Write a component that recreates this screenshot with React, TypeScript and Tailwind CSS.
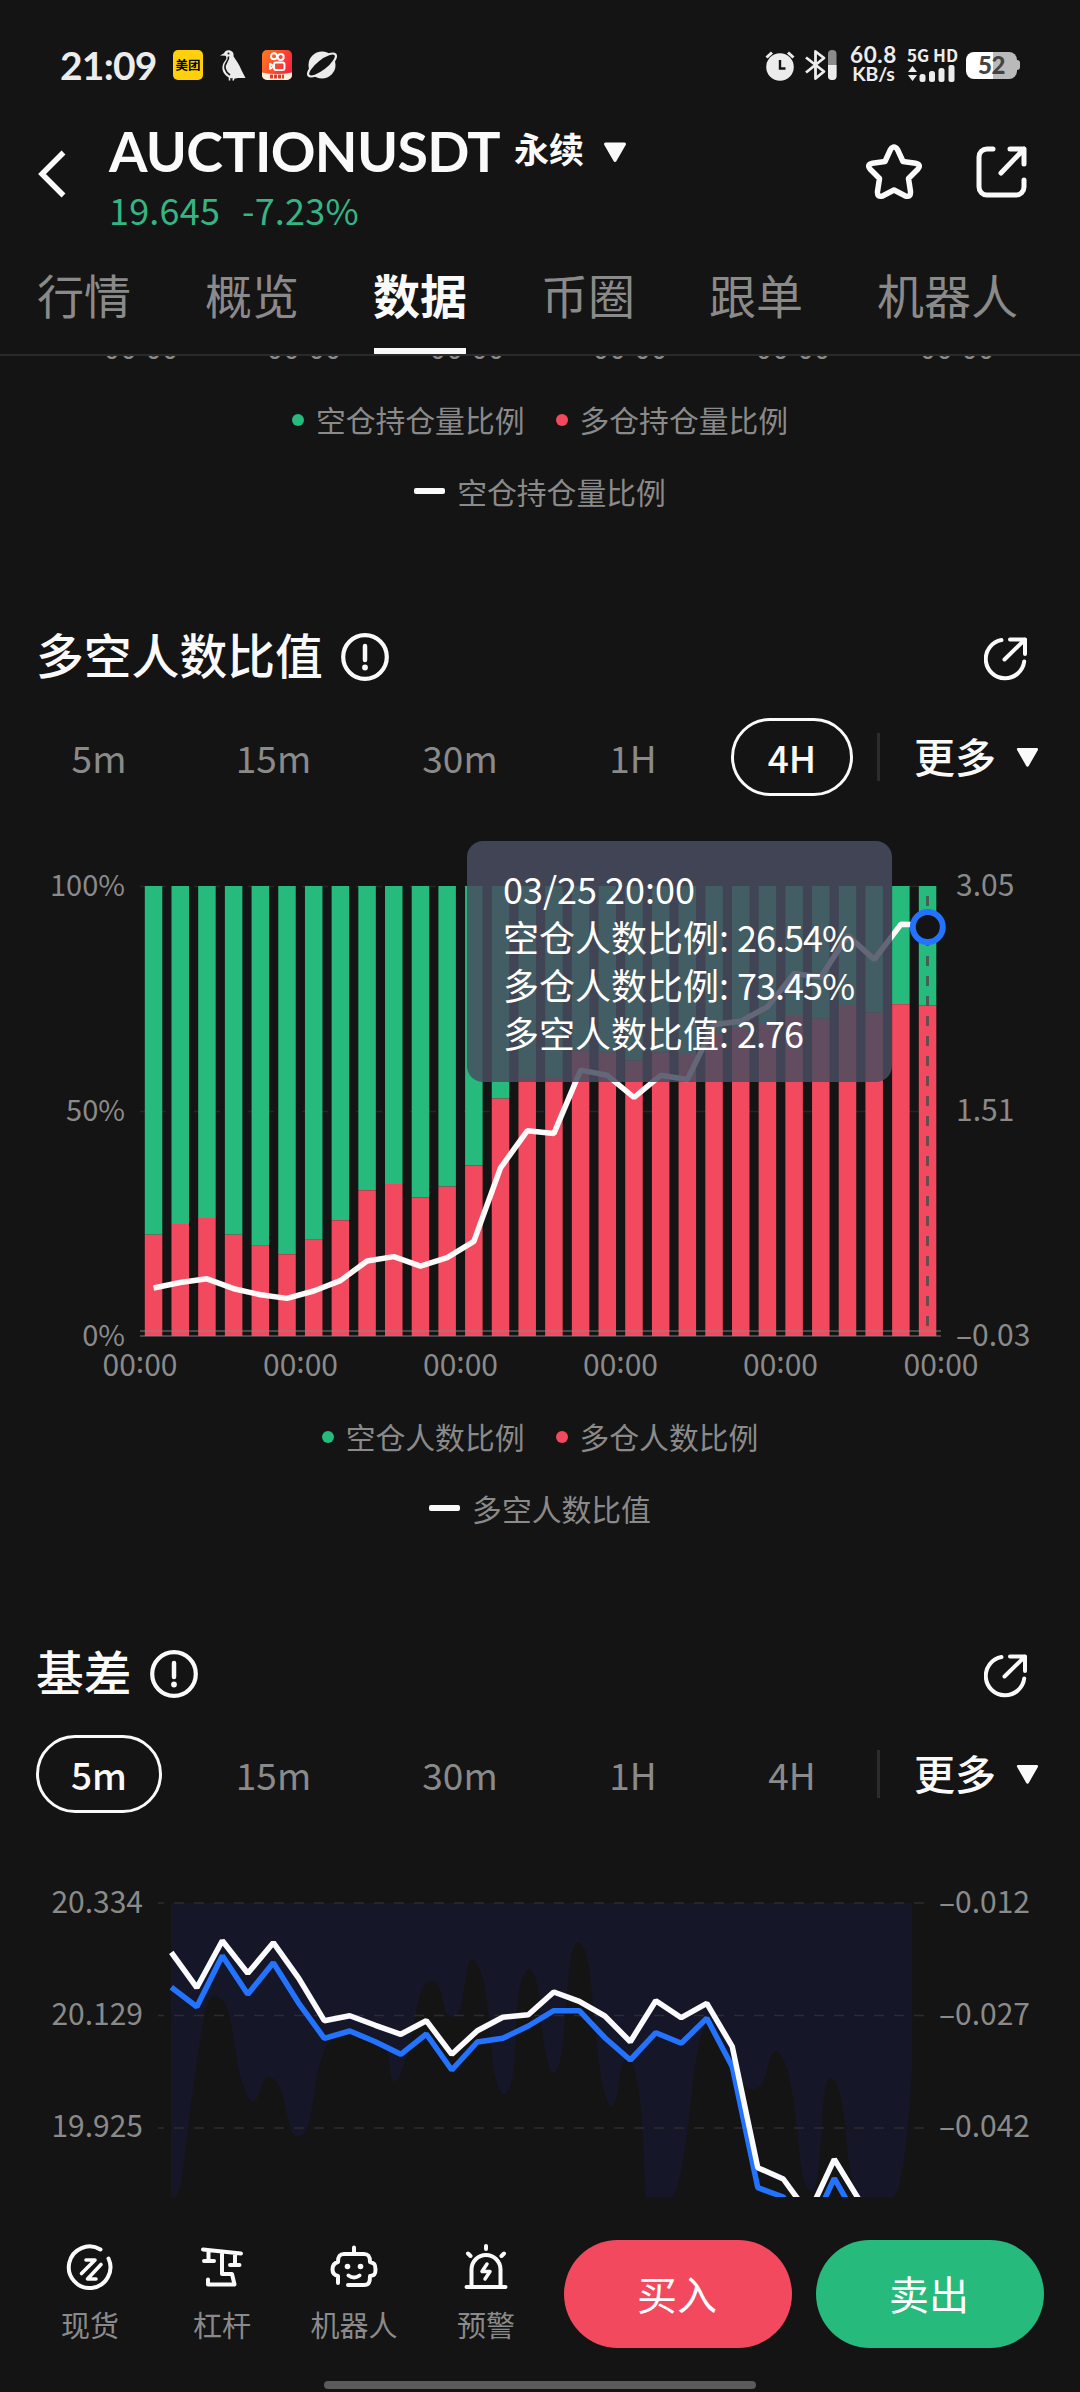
import type { ReactNode } from 'react';

const GREEN = '#26ba7c';
const RED = '#f3495e';
const BLUE = '#2373ff';

const tabs = ['行情', '概览', '数据', '币圈', '跟单', '机器人'];

const periods = [
  { label: '5m', width: 'w-[126px]' },
  { label: '15m', width: 'w-[145px]' },
  { label: '30m', width: 'w-[150px]' },
  { label: '1H', width: 'w-[118px]' },
  { label: '4H', width: 'w-[122px]' },
];

// y where the long share starts, and y of the ratio line, one pair per 4H candle
const ratioBars = [
  1234.7, 1224, 1218, 1234.7, 1245.8, 1254.3, 1239.2, 1220.3, 1190.3, 1184, 1197.4, 1186.6, 1165.5, 1098.6, 1078,
  1078, 1050.5, 1052.5, 1060.5, 1052.5, 1053, 1033, 1028, 1024, 1016, 1018.7, 1006, 1012.7, 1004.2, 1005.3,
];
const ratioLine = [
  1288, 1282.5, 1278.8, 1288.7, 1294.7, 1298.4, 1291, 1280.6, 1261, 1256.6, 1266.2, 1257.7, 1241.4, 1167.8, 1130.8,
  1133.4, 1070.1, 1075.3, 1097.5, 1075.3, 1079.5, 1024.6, 1021.3, 1006.8, 973.5, 977.2, 935.4, 959.5, 924.3, 925,
];

const indexPrice = [
  1952.3, 1987.7, 1940.7, 1973.3, 1942.7, 1978.3, 2020.7, 2015.7, 2025.3, 2034.3, 2020.7, 2054.3, 2030.7, 2017.3, 2014.7,
  1992, 2001.3, 2016, 2041.7, 2000.7, 2017.7, 2003.3, 2046.7, 2167.7, 2179, 2214, 2159.3, 2201,
];
const contractPrice = [
  1987.3, 2006.7, 1955.7, 1994.3, 1962.7, 2003.3, 2038.3, 2031, 2041.7, 2054.3, 2034, 2070, 2042, 2038.3, 2026,
  2010.7, 2010.7, 2037.7, 2060, 2032.7, 2043.3, 2018.3, 2066.7, 2187.7, 2197, 2233, 2178.3, 2223,
];

const basisArea: [number, number][] = [
  [171, 2200], [180, 2199], [188, 2127], [196, 2067], [201, 2033], [206, 2005], [214, 1993], [227, 2003], [234, 2040],
  [238, 2070], [246, 2093], [253, 2105], [260, 2093], [263, 2080], [270, 2076], [281, 2085], [288, 2120], [293, 2137],
  [306, 2135], [312, 2110], [317, 2073], [324, 2050], [333, 2035], [360, 2035], [385, 2040], [389, 2060], [391, 2080],
  [396, 2083], [404, 2067], [410, 2043], [415, 2020], [420, 1990], [432, 1978], [441, 1988], [445, 2015], [455, 2018],
  [462, 2007], [467, 1967], [472, 1956], [482, 1973], [487, 2000], [491, 2043], [494, 2077], [503, 2098], [511, 2087],
  [515, 2060], [517, 2000], [522, 1977], [530, 1966], [538, 1983], [541, 2020], [544, 2047], [552, 2079], [562, 2060],
  [567, 1993], [571, 1950], [580, 1939], [588, 1957], [592, 1993], [597, 2047], [602, 2087], [611, 2112], [618, 2093],
  [621, 2063], [630, 2057], [636, 2073], [642, 2113], [645, 2193], [648, 2205], [675, 2205], [688, 2133], [695, 2060],
  [705, 2020], [719, 2030], [733, 2067], [747, 2091], [763, 2087], [769, 2060], [776, 2047], [788, 2067], [795, 2110],
  [800, 2160], [803, 2180], [810, 2193], [817, 2187], [821, 2143], [824, 2090], [829, 2076], [838, 2083], [845, 2120],
  [848, 2160], [856, 2205], [895, 2205], [905, 2160], [912, 2073],
];

const points = (ys: number[], x0: number, step: number) => ys.map((y, i) => `${x0 + step * i},${y}`).join(' ');

function smooth(pts: [number, number][]) {
  let d = `L${pts[0][0]} ${pts[0][1]}`;
  for (let i = 1; i < pts.length - 1; i++) {
    const [x, y] = pts[i];
    const [nx, ny] = pts[i + 1];
    d += `Q${x} ${y} ${(x + nx) / 2} ${(y + ny) / 2}`;
  }
  const last = pts[pts.length - 1];
  return `${d}L${last[0]} ${last[1]}`;
}

function StatusBar() {
  return (
    <div className="flex h-[130px] items-start justify-between pt-[45px] pr-[60px] pl-[60px] text-[#ececec]">
      <div className="flex h-10 items-center">
        <span className="w-[113px] font-[Lato] text-[39px] leading-none font-bold tracking-[-0.8px]">21:09</span>
        <span className="grid h-[30px] w-[30px] place-items-center rounded-[5px] bg-[#ffd00c] text-[12.5px] leading-none font-bold text-black">
          美团
        </span>
        <svg className="ml-[16px]" width="28" height="31" viewBox="0 0 28 31">
          <path d="M1 5.5 5 3.2C6 .8 8-.2 10.5.3c3.300.6 4.500 3.100 4 6 3 4.500 6 9 8 14L26.500 28h-7.700C14 29.200 9 28.500 6 24.500 2.500 20.500 2.400 15 6.300 10.500 7.700 8.800 7.800 7.200 6.500 5.800Z" fill="currentColor" />
          <path d="M9.500 6.500c.5 2.500-.5 4-2 6C4.500 16.500 6 21.500 11 25" fill="none" stroke="#141414" strokeWidth="1.600" />
          <circle cx="9.500" cy="3.500" r="1" fill="#141414" />
          <path d="M10.500 27v3.500M15 27.500l-1 3" stroke="currentColor" strokeWidth="1.600" />
        </svg>
        <svg className="ml-[15px]" width="30" height="30" viewBox="0 0 30 30" fill="none">
          <defs>
            <linearGradient id="ks" x1="0" y1="0" x2="1" y2="0.5">
              <stop offset="0" stopColor="#ff7a1f" />
              <stop offset="1" stopColor="#f6263f" />
            </linearGradient>
          </defs>
          <rect width="30" height="30" rx="5" fill="url(#ks)" />
          <path d="M0 22.500q15 3 30 0V25a5 5 0 0 1-5 5H5a5 5 0 0 1-5-5Z" fill="#fff0dc" />
          <path d="M8 26.500h14" stroke="#d8422c" strokeWidth="4" strokeDasharray="3 1" />
          <g stroke="#fff" strokeWidth="1.900">
            <circle cx="12" cy="6.200" r="3" />
            <circle cx="18.700" cy="7" r="3" />
            <rect x="12" y="12.500" width="10.500" height="7.500" rx="2" />
            <path d="M12 16.300 8 13.700v5.200Z" strokeLinejoin="round" />
          </g>
        </svg>
        <svg className="ml-[15px]" width="30" height="28" viewBox="0 0 30 28">
          <circle cx="15" cy="14" r="13.500" fill="currentColor" />
          <ellipse cx="15" cy="14" rx="17" ry="6" transform="rotate(-38 15 14)" fill="#141414" stroke="currentColor" strokeWidth="2.200" />
        </svg>
      </div>
      <div className="flex h-10 items-center">
        <svg width="30" height="31" viewBox="0 0 30 31" fill="none">
          <circle cx="15" cy="17" r="13.800" fill="currentColor" />
          <path d="M1.500 7.500 7 2.500M28.500 7.500 23 2.500" stroke="currentColor" strokeWidth="3" />
          <path d="M15 10v8.500h5.500" stroke="#141414" strokeWidth="2.400" />
        </svg>
        <svg className="ml-[9px]" width="33" height="32" viewBox="0 0 33 32" fill="none">
          <path d="M2 8.500 20 22.500 11.500 29.500V2.500L20 9 2 23.500" stroke="currentColor" strokeWidth="2.800" strokeLinejoin="round" />
          <rect x="24" y="1" width="8.500" height="30" rx="4" fill="#8b8b8b" />
          <path d="M24 16h8.500v11a4 4 0 0 1-4 4h-.5a4 4 0 0 1-4-4Z" fill="currentColor" />
        </svg>
        <div className="mt-[-2px] ml-[11px] flex w-[51px] flex-col items-center font-[Lato] font-bold">
          <span className="text-[22.500px] leading-[19px] tracking-[0.6px]">60.8</span>
          <span className="text-[19.500px] leading-[19px] tracking-[-0.2px]">KB/s</span>
        </div>
        <div className="mt-[-2px] ml-[8px] flex w-[51px] flex-col gap-[2px]">
          <span className="font-['Noto_Sans_CJK_SC'] text-[17px] leading-[15px] font-bold whitespace-nowrap">5G HD</span>
          <svg width="49" height="18" viewBox="0 0 49 18" fill="currentColor">
            <path d="M1 8 5.500 2 10 8ZM1 11h9l-4.500 6Z" />
            <rect x="12.500" y="10" width="6" height="8" rx="2.500" />
            <rect x="22" y="7" width="6" height="11" rx="2.500" />
            <rect x="31.500" y="4" width="6" height="14" rx="2.500" />
            <rect x="41.500" y="1" width="6" height="17" rx="2" />
          </svg>
        </div>
        <div className="ml-[8px] flex items-center">
          <span className="grid h-[27px] w-[51px] place-items-center rounded-[8px] bg-linear-to-r from-white from-52% to-[#bababa] to-52% font-[Lato] text-[24px] leading-none font-black tracking-[-0.5px] text-[#444]">
            52
          </span>
          <span className="h-[10px] w-[3px] rounded-r-[3px] bg-[#bababa]" />
        </div>
      </div>
    </div>
  );
}

function Caret({ className, width, height }: { className?: string; width: number; height: number }) {
  return (
    <svg className={className} width={width} height={height} viewBox="0 0 26 21">
      <path d="M3.500 2h19L13 18.500Z" fill="#fafafa" stroke="#fafafa" strokeWidth="3" strokeLinejoin="round" />
    </svg>
  );
}

function Header() {
  return (
    <div className="flex h-[121px] items-start pl-[38px]">
      <svg className="mt-[20px]" width="28" height="48" viewBox="0 0 28 48" fill="none">
        <path d="M25.500 2.500 4 24l21.500 21.500" stroke="#fafafa" strokeWidth="5.500" />
      </svg>
      <div className="ml-[43px] flex flex-col">
        <div className="flex h-[42px] items-center">
          <h1 className="w-[405px] font-[Lato] text-[55.500px] leading-none font-bold tracking-[-0.7px] text-[#fafafa]">AUCTIONUSDT</h1>
          <span className="mt-[-8px] text-[35px] leading-none font-bold text-[#fafafa]">永续</span>
          <Caret className="mt-[3px] ml-[18px]" width={26} height={21} />
        </div>
        <div className="mt-[17px] flex h-[40px] items-center text-[36px] leading-none text-[#35b583]">
          <span className="w-[133px] tracking-[0.2px]">19.645</span>
          <span className="tracking-[0.2px]">-7.23%</span>
        </div>
      </div>
      <div className="mt-[14px] mr-[52px] ml-auto flex items-center gap-[54px]">
        <svg width="56" height="56" viewBox="0 0 56 56" fill="none">
          <path
            d="M24.500 5.500Q28 .5 31.500 5.500L37 17.500 49.500 19.200Q56 20.700 51.500 25.500L42.500 34.500 44.500 47.500Q45 54 39 51.800L28 46 17 51.800Q11 54 11.500 47.500L13.500 34.500 4.500 25.500Q0 20.700 6.500 19.200L19 17.500Z"
            stroke="#fafafa"
            strokeWidth="5.500"
            strokeLinejoin="round"
          />
        </svg>
        <svg width="52" height="52" viewBox="0 0 52 52" fill="none" stroke="#fafafa" strokeWidth="5" strokeLinecap="round" strokeLinejoin="round">
          <path d="M17 3h-6a8 8 0 0 0-8 8v30a8 8 0 0 0 8 8h29a8 8 0 0 0 8-8v-7M34 3h14v15M48 3 25 27" />
        </svg>
      </div>
    </div>
  );
}

function TabBar() {
  return (
    <div className="flex h-[105px] gap-[74px] border-b-2 border-[#2a2a2a] pl-[37px]">
      {tabs.map((tab) =>
        tab === '数据' ? (
          <div key={tab} className="flex flex-col justify-between text-[47px] leading-[86px] font-bold text-[#fafafa]">
            {tab}
            <span className="mx-px h-[6px] bg-[#fafafa]" />
          </div>
        ) : (
          <div key={tab} className="text-[47px] leading-[86px] whitespace-nowrap text-[#8a8a8a]">{tab}</div>
        ),
      )}
    </div>
  );
}

function Legend({ short, long, line }: { short: string; long: string; line: string }) {
  return (
    <div className="-mt-[2px] flex flex-col pb-[2px] text-[29.800px] leading-[72px] text-[#8a8a8a]">
      <div className="flex items-center justify-center">
        <span className="mt-[2px] mr-[12px] h-[12px] w-[12px] rounded-full bg-[#26ba7c]" />
        {short}
        <span className="mt-[2px] mr-[12px] ml-[31px] h-[12px] w-[12px] rounded-full bg-[#f3495e]" />
        {long}
      </div>
      <div className="flex items-center justify-center">
        <span className="mr-[12px] h-[6px] w-[31px] rounded-[2px] bg-[#fafafa]" />
        {line}
      </div>
    </div>
  );
}

// Time label with the colon lifted to the middle of the digits
function TimeLabel({ x, y }: { x: number; y: number }) {
  return (
    <text x={x} y={y} textAnchor="middle">
      00<tspan dy="-3">:</tspan><tspan dy="3">00</tspan>
    </text>
  );
}

function Section({ title, period, children }: { title: string; period: string; children: ReactNode }) {
  return (
    <section className="mt-[97px]">
      <div className="flex h-[60px] items-center pr-[52px] pl-[36px]">
        <h2 className="mb-[5px] text-[47.800px] leading-none font-medium text-[#fafafa]">{title}</h2>
        <svg className="mt-[2px] ml-[18px]" width="48" height="48" viewBox="0 0 48 48" fill="none" stroke="#fafafa">
          <circle cx="24" cy="24" r="21.800" strokeWidth="4.200" />
          <path d="M24 13v14" strokeWidth="4.500" strokeLinecap="round" />
          <circle cx="24" cy="34.500" r="2.900" fill="#fafafa" stroke="none" />
        </svg>
        <svg className="mt-[5px] ml-auto" width="44" height="45" viewBox="0 0 44 45" fill="none" stroke="#fafafa" strokeWidth="4" strokeLinecap="round" strokeLinejoin="round">
          <path d="M17.500 4A19.300 19.300 0 1 0 40.200 25.500M26 3.500h15V18M41 3.500 20.500 23.500" />
        </svg>
      </div>
      <div className="mt-[32px] flex h-[78px] items-center pl-[36px]">
        <div className="flex gap-[39px]">
          {periods.map(({ label, width }) => (
            <button
              key={label}
              className={`h-[78px] rounded-full border-[3px] text-[37px] leading-[70px] ${width} ${
                label === period ? 'border-[#fafafa] font-medium text-[#fafafa]' : 'border-transparent text-[#8a8a8a]'
              }`}
            >
              {label}
            </button>
          ))}
        </div>
        <span className="ml-[24px] h-[48px] w-[3px] bg-[#2c2c2c]" />
        <span className="mb-[4px] ml-[34px] text-[41px] leading-none font-medium text-[#fafafa]">更多</span>
        <Caret className="ml-[19px]" width={25} height={21} />
      </div>
      {children}
    </section>
  );
}

function RatioChart() {
  return (
    <div className="relative h-[606px]">
      <svg width="1080" height="606" viewBox="0 796 1080 606" fontSize="30" fill="#8a8a8a">
        <path d="M140 886.500H941M140 1111.500H941" stroke="#262626" strokeWidth="1.500" strokeDasharray="26 28" />
        {ratioBars.map((y, i) => {
          const x = 144.8 + i * 26.69;
          return (
            <g key={i}>
              <rect x={x} y="886" width="17.500" height={y - 886} fill={GREEN} />
              <rect x={x} y={y} width="17.500" height={1336 - y} fill={RED} />
            </g>
          );
        })}
        <path d="M140 1331H941M140 1336H941" stroke="#8a8a8a" strokeOpacity="0.6" strokeWidth="1.500" />
        <polyline points={points(ratioLine, 153.6, 26.69)} fill="none" stroke="#fffafa" strokeWidth="5.500" strokeLinejoin="bevel" />
        <path d="M927.500 896V1330" stroke="#4d4d4d" strokeOpacity="0.85" strokeWidth="3" strokeDasharray="10" />
        <circle cx="927.800" cy="927" r="15" fill="#141414" stroke={BLUE} strokeWidth="6" />
        <g textAnchor="end" fontSize="29">
          <text x="125" y="895.500">100%</text>
          <text x="125" y="1120.500">50%</text>
          <text x="125" y="1345.500">0%</text>
        </g>
        <text x="956" y="895.500">3.05</text>
        <text x="956" y="1120.500">1.51</text>
        <text x="956" y="1345.500">–0.03</text>
        {[140, 300.5, 460.5, 620.5, 780.5, 941].map((x) => (
          <TimeLabel key={x} x={x} y={1376} />
        ))}
      </svg>
      <div className="absolute top-[45px] left-[467px] h-[241px] w-[425px] rounded-[16px] bg-[#484c5f]/85 pt-[23px] pl-[36px] text-[36px] leading-[48px] whitespace-nowrap text-white">
        <div>03/25 20:00</div>
        <div>空仓人数比例:<span className="ml-[8px] tracking-[-1px]">26.54%</span></div>
        <div>多仓人数比例:<span className="ml-[8px] tracking-[-1px]">73.45%</span></div>
        <div>多空人数比值:<span className="ml-[8px] tracking-[-1px]">2.76</span></div>
      </div>
    </div>
  );
}

function BasisChart() {
  return (
    <svg width="1080" height="384" viewBox="0 1813 1080 384" fontSize="30" fill="#8a8a8a">
      <path d={`M171 1903${smooth(basisArea)}V1903Z`} fill="#151728" />
      <path d="M158 1903H924M158 2015.500H924M158 2128H924" stroke="#2d2b30" strokeWidth="1.600" strokeDasharray="10" strokeDashoffset="4" />
      <polyline points={points(contractPrice, 171.300, 25.500)} fill="none" stroke={BLUE} strokeWidth="5.500" strokeLinejoin="bevel" />
      <polyline points={points(indexPrice, 171.300, 25.500)} fill="none" stroke="#fafaff" strokeWidth="5.500" strokeLinejoin="bevel" />
      <g textAnchor="end">
        <text x="143" y="1912.500">20.334</text>
        <text x="143" y="2024.500">20.129</text>
        <text x="143" y="2137">19.925</text>
      </g>
      <text x="939" y="1912.500">–0.012</text>
      <text x="939" y="2024.500">–0.027</text>
      <text x="939" y="2137">–0.042</text>
    </svg>
  );
}

function NavItem({ label, children }: { label: string; children: ReactNode }) {
  return (
    <div className="flex w-[132px] flex-col items-center">
      <svg width="48" height="48" viewBox="0 0 48 48" fill="none" stroke="#fafafa" strokeWidth="4" strokeLinecap="round" strokeLinejoin="round">
        {children}
      </svg>
      <span className="mt-[16px] text-[29px] leading-[32px] text-[#8a8a8a]">{label}</span>
    </div>
  );
}

function BottomBar() {
  return (
    <div className="flex h-[195px] flex-col bg-[#141414]">
      <div className="flex pt-[43px] pl-[24px]">
        <div className="flex pt-[4px]">
          <NavItem label="现货">
            <path d="M34.500 5.500A20.800 20.800 0 1 0 42.500 14.500" />
            <path d="M20 16h9L15.500 29.500M35 20.500 21.500 35H30" strokeWidth="3.600" />
          </NavItem>
          <NavItem label="杠杆">
            <path d="M5 5.500 43 9.500M10.500 7v9.500M6 17h10M37 11v9.500M32 21h9.500M24 8v22h10l2.500 10.500H10v-5" />
          </NavItem>
          <NavItem label="机器人">
            <path d="M8 39v-7c-4-1-5.500-3-5.500-6.500S4 19 8 18c0-5 1-8 6-8h20c5 0 6 3 6 8 4 1 5.500 2 5.500 7.500S44 31 40 32c0 6-1 9-6 9H18M24 9V3.500" />
            <path d="M18.500 31.500q5.500 4 11 0" />
            <circle cx="17.500" cy="22.500" r="2.800" fill="#fafafa" stroke="none" />
            <circle cx="30.500" cy="22.500" r="2.800" fill="#fafafa" stroke="none" />
          </NavItem>
          <NavItem label="预警">
            <path d="M4.500 43h39M9.500 43V25.500a14.500 14.500 0 0 1 29 0V43M24 2v3M6 9.500 8.500 12M42 9.500 39.500 12" />
            <path d="M25 20l-5 7.500h8L23 35" strokeWidth="3.500" />
          </NavItem>
        </div>
        <div className="ml-[12px] flex gap-[24px] text-[40px] text-white">
          <button className="h-[108px] w-[228px] rounded-full bg-[#f3495e] pr-[2px] pb-[2px]">买入</button>
          <button className="h-[108px] w-[228px] rounded-full bg-[#26ba7c] pr-[2px] pb-[2px]">卖出</button>
        </div>
      </div>
      <div className="mx-auto mt-auto mb-[3px] h-[8px] w-[432px] rounded-full bg-[#5b5b5b]" />
    </div>
  );
}

export default function App() {
  return (
    <div className="h-[2392px] w-[1080px] overflow-hidden bg-[#141414] font-['Noto_Sans_CJK_SC',sans-serif]">
      <StatusBar />
      <Header />
      <TabBar />
      <main className="h-[1841px] overflow-hidden">
        <svg className="block" width="1080" height="29" viewBox="0 356 1080 29" fontSize="30" fill="#8a8a8a">
          {[141, 304, 467, 630, 793, 957].map((x) => (
            <TimeLabel key={x} x={x} y={359} />
          ))}
        </svg>
        <Legend short="空仓持仓量比例" long="多仓持仓量比例" line="空仓持仓量比例" />
        <Section title="多空人数比值" period="4H">
          <RatioChart />
          <Legend short="空仓人数比例" long="多仓人数比例" line="多空人数比值" />
        </Section>
        <Section title="基差" period="5m">
          <BasisChart />
        </Section>
      </main>
      <BottomBar />
    </div>
  );
}
